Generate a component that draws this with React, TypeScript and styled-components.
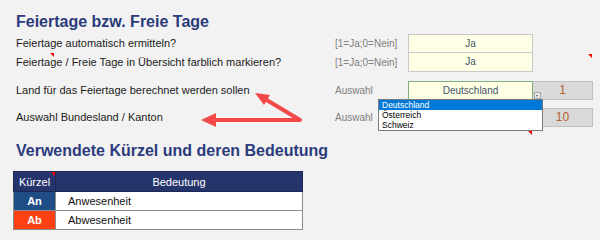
import React from 'react'
import styled, { createGlobalStyle } from 'styled-components'

const GlobalStyle = createGlobalStyle`
  body {
    margin: 0;
    background: #f2f2f2;
    font-family: 'Liberation Sans', Arial, sans-serif;
  }
`

const Sheet = styled.div`
  position: relative;
  width: 600px;
  height: 240px;
  overflow: hidden;
  padding-left: 16px;
  box-sizing: border-box;
  background: #f2f2f2;
`

const Heading = styled.h2<{ $top: number }>`
  margin: ${({ $top }) => $top}px 0 0 0;
  font-size: 16px;
  line-height: 20px;
  font-weight: 700;
  color: #2b3b7c;
  white-space: nowrap;
`

const Row = styled.div<{ $gap: number }>`
  display: grid;
  grid-template-columns: 319px 73px 125px 60px;
  height: 19px;
  margin-top: ${({ $gap }) => $gap}px;
`

const Label = styled.div`
  position: relative;
  font-size: 11px;
  line-height: 19px;
  color: #1b1b1b;
  white-space: nowrap;
`

const Hint = styled.div`
  font-size: 10px;
  line-height: 19px;
  color: #808080;
  white-space: nowrap;
`

const Field = styled.div<{ $green?: boolean; $noTop?: boolean }>`
  position: relative;
  box-sizing: border-box;
  background: #ffffe5;
  border: 1px solid ${({ $green }) => ($green ? '#7fae7f' : '#c9c9c9')};
  border-top-width: ${({ $noTop }) => ($noTop ? 0 : 1)}px;
  font-size: 10px;
  line-height: 17px;
  text-align: center;
  color: #44546a;
`

const Extra = styled.div<{ $empty?: boolean }>`
  position: relative;
  box-sizing: border-box;
  background: ${({ $empty }) => ($empty ? 'transparent' : '#d9d9d9')};
  border: 1px solid ${({ $empty }) => ($empty ? 'transparent' : '#bfbfbf')};
  border-left: none;
  font-size: 12px;
  line-height: 17px;
  text-align: center;
  color: #b5632a;
`

const Marker = styled.span<{ $left?: number; $top?: number }>`
  position: absolute;
  top: ${({ $top }) => $top ?? 0}px;
  ${({ $left }) => ($left !== undefined ? `left: ${$left}px;` : 'right: 0;')}
  width: 0;
  height: 0;
  border-top: 4px solid #ff0000;
  border-left: 4px solid transparent;
`

const DropButton = styled.span`
  position: absolute;
  right: -9px;
  top: 10px;
  width: 7px;
  height: 7px;
  box-sizing: border-box;
  background: #e8e8e8;
  border: 1px solid #a6a6a6;
  z-index: 4;

  &::after {
    content: '';
    position: absolute;
    left: 1px;
    top: 2px;
    border-top: 2px solid #555;
    border-left: 1.5px solid transparent;
    border-right: 1.5px solid transparent;
  }
`

const DropList = styled.ul`
  position: absolute;
  left: -31px;
  top: 17px;
  width: 165px;
  margin: 0;
  padding: 0;
  list-style: none;
  box-sizing: border-box;
  background: #fff;
  border: 1px solid #7a7a7a;
  z-index: 5;
  text-align: left;
`

const DropItem = styled.li<{ $active?: boolean }>`
  height: 10px;
  padding-left: 3px;
  font-size: 8.5px;
  line-height: 10px;
  color: ${({ $active }) => ($active ? '#fff' : '#000')};
  background: ${({ $active }) => ($active ? '#0078d7' : 'transparent')};
`

const Table = styled.table`
  margin: 10px 0 0 -3px;
  width: 290px;
  border-collapse: collapse;
  font-size: 11px;
`

const HeadCell = styled.th<{ $w?: number }>`
  position: relative;
  width: ${({ $w }) => ($w ? `${$w}px` : 'auto')};
  height: 19px;
  padding: 0;
  background: #26346c;
  border: 1px solid #1c2756;
  color: #fff;
  font-weight: 400;
  text-align: center;
`

const CodeCell = styled.td<{ $bg: string }>`
  height: 18px;
  padding: 0;
  background: ${({ $bg }) => $bg};
  border: 1px solid #8c8c8c;
  color: #fff;
  font-weight: 700;
  text-align: center;
`

const TextCell = styled.td`
  height: 18px;
  padding: 0 0 0 12px;
  background: #fff;
  border: 1px solid #8c8c8c;
  color: #111;
`

const Arrows = styled.svg`
  position: absolute;
  left: 0;
  top: 0;
  pointer-events: none;
`

const arrowRed = '#f24848'

const codes = [
  { code: 'An', text: 'Anwesenheit', bg: '#1f4e87' },
  { code: 'Ab', text: 'Abwesenheit', bg: '#ff4013' },
]

const App: React.FC = () => {
  return (
    <>
      <GlobalStyle />
      <Sheet>
        <Heading $top={12}>Feiertage bzw. Freie Tage</Heading>

        <Row $gap={2}>
          <Label>Feiertage automatisch ermitteln?</Label>
          <Hint>[1=Ja;0=Nein]</Hint>
          <Field>Ja</Field>
          <Extra $empty />
        </Row>
        <Row $gap={0}>
          <Label>
            Feiertage / Freie Tage in Übersicht farblich markieren?
            <Marker $left={34} />
          </Label>
          <Hint>[1=Ja;0=Nein]</Hint>
          <Field $noTop>Ja</Field>
          <Extra $empty>
            <Marker />
          </Extra>
        </Row>

        <Row $gap={9}>
          <Label>Land für das Feiertage berechnet werden sollen</Label>
          <Hint>Auswahl</Hint>
          <Field $green>
            Deutschland
            <DropButton />
            <DropList>
              <DropItem $active>Deutschland</DropItem>
              <DropItem>Österreich</DropItem>
              <DropItem>Schweiz</DropItem>
            </DropList>
          </Field>
          <Extra>1</Extra>
        </Row>
        <Row $gap={8}>
          <Label>Auswahl Bundesland / Kanton</Label>
          <Hint>Auswahl</Hint>
          <Field>
            <Marker $top={22} />
          </Field>
          <Extra>10</Extra>
        </Row>

        <Heading $top={14}>Verwendete Kürzel und deren Bedeutung</Heading>

        <Table>
          <thead>
            <tr>
              <HeadCell $w={41}>
                Kürzel
                <Marker />
              </HeadCell>
              <HeadCell>Bedeutung</HeadCell>
            </tr>
          </thead>
          <tbody>
            {codes.map((c) => (
              <tr key={c.code}>
                <CodeCell $bg={c.bg}>{c.code}</CodeCell>
                <TextCell>{c.text}</TextCell>
              </tr>
            ))}
          </tbody>
        </Table>

        <Arrows width={600} height={240} viewBox='0 0 600 240'>
          <polyline
            points='265,99 300,120 213,120'
            fill='none'
            stroke={arrowRed}
            strokeWidth={4}
            strokeLinecap='round'
            strokeLinejoin='round'
          />
          <polygon points='255,93 270,95 264,105' fill={arrowRed} />
          <polygon points='201,120 216,113 216,127' fill={arrowRed} />
        </Arrows>
      </Sheet>
    </>
  )
}

export default App
